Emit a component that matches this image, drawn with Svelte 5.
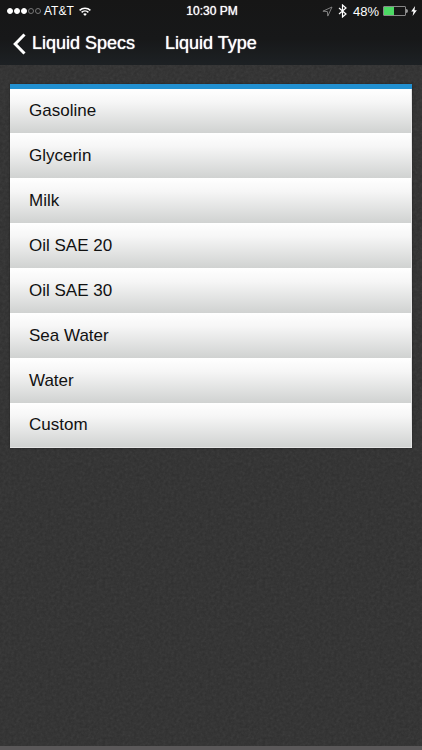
<script>
    const liquids = [
        'Gasoline',
        'Glycerin',
        'Milk',
        'Oil SAE 20',
        'Oil SAE 30',
        'Sea Water',
        'Water',
        'Custom'
    ];

    const signal = [true, true, true, false, false];
    const battery = 48;

    let selected = $state('');
</script>

<div class="screen">
    <header>
        <div class="status">
            <div class="carrier">
                <div class="signal">
                    {#each signal as on}
                        <span class="dot" class:on></span>
                    {/each}
                </div>
                <span>AT&amp;T</span>
                <svg class="wifi" width="12" height="9" viewBox="0 0 12 9" fill="none" stroke="#fff" aria-hidden="true">
                    <path d="M.6 3.4a7.7 7.7 0 0 1 10.8 0" stroke-width="1.5" />
                    <path d="M2.6 5.4a4.9 4.9 0 0 1 6.8 0" stroke-width="1.5" />
                    <path d="M6 9 4.2 7.1a2.6 2.6 0 0 1 3.6 0Z" fill="#fff" stroke="none" />
                </svg>
            </div>
            <time>10:30 PM</time>
            <div class="indicators">
                <svg width="11" height="11" viewBox="0 0 11 11" fill="none" stroke="#8b8b8b" aria-hidden="true">
                    <path d="M10 1 .9 5.2l4.5.4.4 4.5Z" stroke-width=".9" stroke-linejoin="round" />
                </svg>
                <svg class="bluetooth" width="9" height="14" viewBox="0 0 9 14" fill="none" stroke="#fff" aria-hidden="true">
                    <path d="m1 4 7 6-3.5 3V1L8 4l-7 6" stroke-width="1.2" />
                </svg>
                <span class="percent">{battery}%</span>
                <div class="battery">
                    <div class="level" style="width: {battery}%"></div>
                </div>
                <svg class="bolt" width="6" height="10" viewBox="0 0 6 10" fill="#fff" aria-hidden="true">
                    <path d="M4.1 0 .2 5.4h2.3L1.6 10 5.9 4.2H3.5Z" />
                </svg>
            </div>
        </div>

        <nav>
            <button class="back" type="button">
                <svg width="13" height="22" viewBox="0 0 13 22" fill="none" stroke="#fff" aria-hidden="true">
                    <path d="M11.5 1.5 2.2 11l9.3 9.5" stroke-width="3" />
                </svg>
                Liquid Specs
            </button>
            <h1>Liquid Type</h1>
        </nav>
    </header>

    <main>
        <ul>
            {#each liquids as liquid}
                <li>
                    <button
                        type="button"
                        aria-pressed={selected === liquid}
                        onclick={() => (selected = liquid)}
                    >
                        {liquid}
                    </button>
                </li>
            {/each}
        </ul>
    </main>

    <footer></footer>
</div>

<style>
    :global(body) {
        margin: 0;
        background: #333;
    }

    .screen {
        min-height: 100vh;
        display: flex;
        flex-direction: column;
        font-family: 'Liberation Sans', Helvetica, Arial, sans-serif;
        color: #fff;
        background-color: #2e2e2e;
        /* leather grain */
        background-image: url("data:image/svg+xml,%3Csvg xmlns='http://www.w3.org/2000/svg' width='160' height='160'%3E%3Cfilter id='n' x='0' y='0' width='100%25' height='100%25'%3E%3CfeTurbulence type='fractalNoise' baseFrequency='.35' numOctaves='3' stitchTiles='stitch'/%3E%3CfeColorMatrix type='saturate' values='0'/%3E%3C/filter%3E%3Crect width='160' height='160' filter='url(%23n)' opacity='.1'/%3E%3C/svg%3E");
    }

    button {
        font: inherit;
        color: inherit;
        background: none;
        border: none;
        padding: 0;
        cursor: pointer;
    }

    svg {
        display: block;
    }

    /* HEADER */
    header {
        background: linear-gradient(#161616, #171819 60%, #1d2124);
    }

    .status {
        display: grid;
        grid-template-columns: 1fr auto 1fr;
        align-items: center;
        height: 22px;
        padding: 0 5px 0 7px;
        font-size: 12px;
    }

    .carrier,
    .indicators,
    .signal {
        display: flex;
        align-items: center;
    }

    .carrier {
        gap: 3px;
    }

    .signal {
        gap: 1px;
    }

    .dot {
        box-sizing: border-box;
        width: 6px;
        height: 6px;
        border: 1px solid #777;
        border-radius: 50%;
    }

    .dot.on {
        border-color: #fff;
        background: #fff;
    }

    .wifi {
        margin-left: 2px;
    }

    time {
        text-shadow: 0 0 1px #fff;
    }

    .indicators {
        justify-content: flex-end;
    }

    .bluetooth {
        margin-left: 5px;
    }

    .percent {
        margin: 0 4px 0 6px;
        font-size: 13px;
    }

    .battery {
        box-sizing: border-box;
        position: relative;
        width: 23px;
        height: 10px;
        border: 1px solid #888;
        border-radius: 1px;
    }

    .battery::after {
        content: '';
        position: absolute;
        top: 2px;
        right: -3px;
        width: 2px;
        height: 4px;
        border-radius: 0 2px 2px 0;
        background: #999;
    }

    .level {
        height: 100%;
        background: #4cd964;
    }

    .bolt {
        margin-left: 5px;
    }

    nav {
        display: flex;
        align-items: center;
        gap: 30px;
        height: 43px;
        padding: 0 13px;
        font-size: 18px;
        text-shadow: 0 0 1px #fff;
    }

    .back {
        display: flex;
        align-items: center;
        gap: 6px;
        text-shadow: inherit;
    }

    h1 {
        margin: 0;
        font-size: 18px;
        font-weight: 400;
    }

    /* LIST */
    main {
        flex: 1;
        padding: 19px 10px;
    }

    ul {
        margin: 0;
        padding: 0;
        list-style: none;
        border-top: 5px solid #2290d0;
        border-bottom: 1px solid #e4e4e4;
        box-shadow: 0 0 2px #222;
    }

    li button {
        display: block;
        box-sizing: border-box;
        width: 100%;
        height: 45px;
        padding: 0 19px;
        border-right: 1px solid #e4e4e4;
        text-align: left;
        font-size: 17px;
        color: #111;
        background: linear-gradient(#fff, #f6f6f6 30%, #d0d2d1);
    }

    li:first-child button,
    li:last-child button {
        height: 44px;
    }

    footer {
        height: 4px;
        background: #5a5859;
    }
</style>
